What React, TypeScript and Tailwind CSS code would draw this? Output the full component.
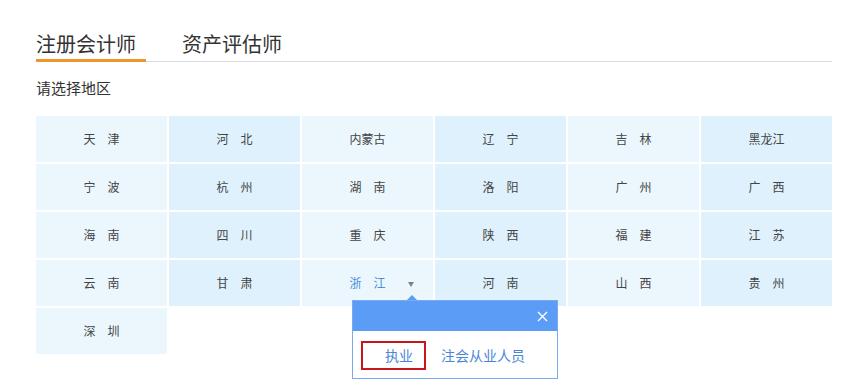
import React from 'react';

const regions = [
  '天　津', '河　北', '内蒙古', '辽　宁', '吉　林', '黑龙江',
  '宁　波', '杭　州', '湖　南', '洛　阳', '广　州', '广　西',
  '海　南', '四　川', '重　庆', '陕　西', '福　建', '江　苏',
  '云　南', '甘　肃', '浙　江', '河　南', '山　西', '贵　州',
  '深　圳',
];

export default function App() {
  return (
    <div
      className="w-[863px] h-[391px] bg-white overflow-hidden"
      style={{ fontFamily: '"Noto Sans CJK SC", "Microsoft YaHei", sans-serif' }}
    >
      <div className="ml-[36px] w-[796px] pt-[30px]">
        {/* tabs */}
        <div className="flex border-b border-[#d6dce6]">
          <div className="w-[110px] text-[20px] leading-[28px] pb-[1px] text-[#333] border-b-[3px] border-[#f0952c] -mb-[1px]">
            注册会计师
          </div>
          <div className="ml-[36px] text-[20px] leading-[28px] text-[#333]">
            资产评估师
          </div>
        </div>

        <div className="mt-[16px] text-[15px] leading-[20px] text-[#333]">请选择地区</div>

        {/* region grid */}
        <div className="relative mt-[18px] grid grid-cols-6 gap-[2px]">
          {regions.map((name, i) => {
            const active = name === '浙　江';
            const dark = i % 2 === 1;
            return (
              <div
                key={i}
                className={
                  'relative h-[46px] flex items-center justify-center text-[12px] ' +
                  (dark ? 'bg-[#dff1fc] ' : 'bg-[#ebf7fd] ') +
                  (active ? 'text-[#4a8fdf]' : 'text-[#444]')
                }
              >
                {name}
                {active && (
                  <span className="absolute left-[106px] top-[22px] w-0 h-0 border-l-[3.5px] border-r-[3.5px] border-t-[5px] border-l-transparent border-r-transparent border-t-[#808080]" />
                )}
              </div>
            );
          })}

          {/* popup */}
          <div className="absolute left-[316px] top-[184px] w-[206px] h-[79px] bg-white border border-[#79a9ee]">
            <span className="absolute left-[54px] -top-[6px] w-0 h-0 border-l-[5px] border-r-[5px] border-b-[5px] border-l-transparent border-r-transparent border-b-[#5b9df6]" />
            <div className="h-[30px] bg-[#5b9df6] flex items-center justify-end pr-[9px]">
              <svg width="11" height="11" viewBox="0 0 11 11">
                <path d="M1 1 L10 10 M10 1 L1 10" stroke="#fff" strokeWidth="1.4" />
              </svg>
            </div>
            <div className="flex items-center pl-[8px] pt-[10px]">
              <div className="h-[29px] w-[65px] border-2 border-[#c8161d] flex items-center justify-end pr-[11px] text-[14px] text-[#4a86d6]">
                执业
              </div>
              <div className="ml-[15px] text-[14px] text-[#4a86d6]">注会从业人员</div>
            </div>
          </div>
        </div>
      </div>
    </div>
  );
}
